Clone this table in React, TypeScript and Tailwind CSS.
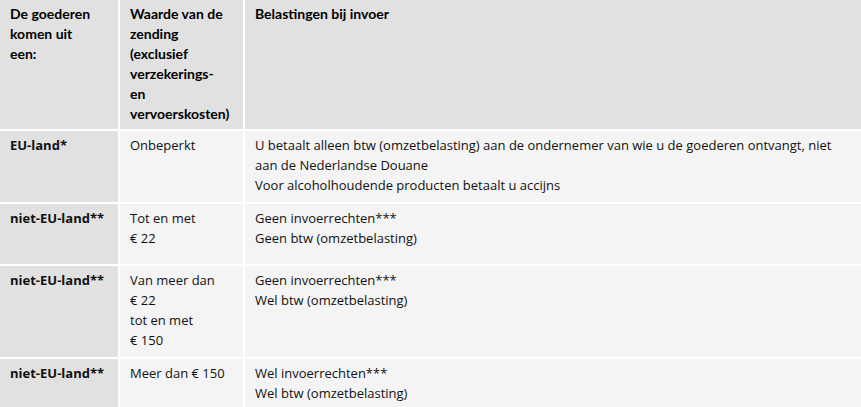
import React from "react";

const body = "font-['Open_Sans',sans-serif] text-[13px] leading-[20px] text-[#111]";
const head = "font-['Lato',sans-serif] text-[14px] font-bold leading-[20px] text-black";

function Lines({ lines }: { lines: string[] }) {
  return (
    <>
      {lines.map((l, i) => (
        <div key={i} className="whitespace-nowrap">
          {l}
        </div>
      ))}
    </>
  );
}

const rows: { land: string; value: string[]; tax: string[] }[] = [
  {
    land: "EU-land*",
    value: ["Onbeperkt"],
    tax: [
      "U betaalt alleen btw (omzetbelasting) aan de ondernemer van wie u de goederen ontvangt, niet",
      "aan de Nederlandse Douane",
      "Voor alcoholhoudende producten betaalt u accijns",
    ],
  },
  {
    land: "niet-EU-land**",
    value: ["Tot en met", "€ 22"],
    tax: ["Geen invoerrechten***", "Geen btw (omzetbelasting)"],
  },
  {
    land: "niet-EU-land**",
    value: ["Van meer dan", "€ 22", "tot en met", "€ 150"],
    tax: ["Geen invoerrechten***", "Wel btw (omzetbelasting)"],
  },
  {
    land: "niet-EU-land**",
    value: ["Meer dan € 150"],
    tax: ["Wel invoerrechten***", "Wel btw (omzetbelasting)"],
  },
];

export default function App() {
  return (
    <div className="w-[861px] h-[407px] bg-white overflow-hidden">
      <div className="grid grid-cols-[118px_123px_1fr] grid-rows-[129px_71px_60px_91px_80px] gap-[2px] bg-white">
        <div className={`bg-[#e1e1e1] pl-[10px] pt-[4px] ${head}`}>
          <Lines lines={["De goederen", "komen uit", "een:"]} />
        </div>
        <div className={`bg-[#e1e1e1] pl-[10px] pt-[4px] ${head}`}>
          <Lines
            lines={["Waarde van de", "zending", "(exclusief", "verzekerings-", "en", "vervoerskosten)"]}
          />
        </div>
        <div className={`bg-[#e1e1e1] pl-[10px] pt-[4px] ${head}`}>
          <Lines lines={["Belastingen bij invoer"]} />
        </div>
        {rows.map((r, i) => (
          <React.Fragment key={i}>
            <div className={`bg-[#e1e1e1] pl-[10px] pt-[4px] font-bold ${body}`}>
              <Lines lines={[r.land]} />
            </div>
            <div className={`bg-[#f4f4f4] pl-[10px] pt-[4px] ${body}`}>
              <Lines lines={r.value} />
            </div>
            <div className={`bg-[#f4f4f4] pl-[10px] pt-[4px] ${body}`}>
              <Lines lines={r.tax} />
            </div>
          </React.Fragment>
        ))}
      </div>
    </div>
  );
}
